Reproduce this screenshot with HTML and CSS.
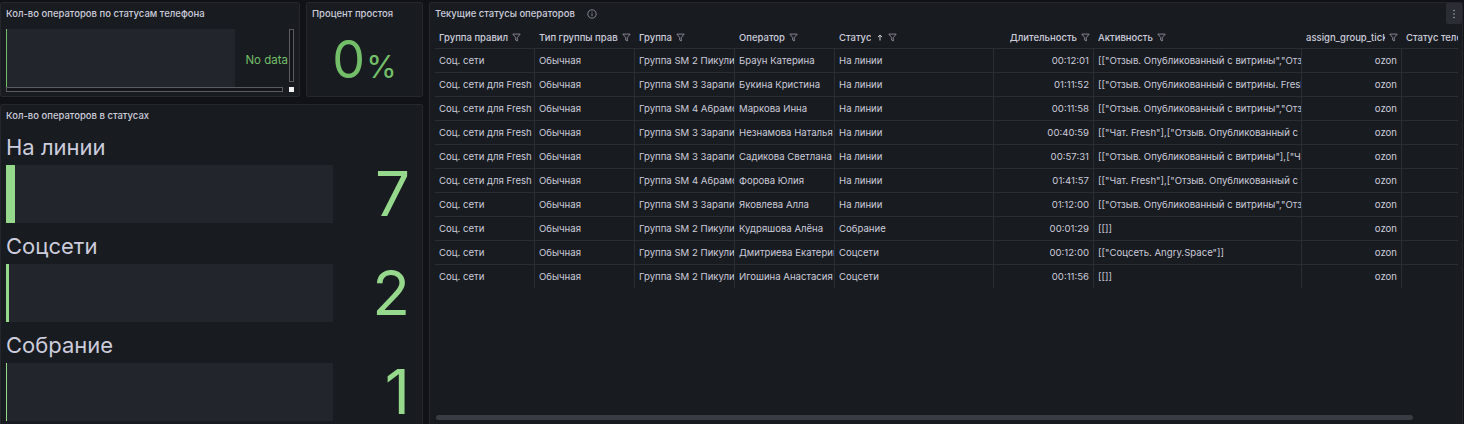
FILE: index.html
```html
<!DOCTYPE html>
<html lang="ru">
<head>
<meta charset="utf-8">
<title>Статусы операторов</title>
<link rel="stylesheet" href="styles.css">
</head>
<body>
<div class="dash">
  <div class="left">
    <div class="toprow">
      <section class="panel p-phone">
        <div class="ptitle">Кол-во операторов по статусам телефона</div>
        <div class="gauge-wrap">
          <div class="gauge-main">
            <div class="gauge-bg"></div>
            <div class="nodata">No data</div>
          </div>
          <div class="vscroll"></div>
          <div class="hscroll"></div>
          <div class="corner"></div>
        </div>
      </section>
      <section class="panel p-pct">
        <div class="ptitle">Процент простоя</div>
        <div class="pct"><span class="pct-num">0</span><span class="pct-unit">%</span></div>
      </section>
    </div>
    <section class="panel p-status">
      <div class="ptitle">Кол-во операторов в статусах</div>
      <div class="bars">
        <div class="bar-item">
          <div class="bar-label">На линии</div>
          <div class="bar-row">
            <div class="bar-track"><div class="bar-fill" style="width:9px"></div></div>
            <div class="bar-value">7</div>
          </div>
        </div>
        <div class="bar-item">
          <div class="bar-label">Соцсети</div>
          <div class="bar-row">
            <div class="bar-track"><div class="bar-fill" style="width:2.6px"></div></div>
            <div class="bar-value">2</div>
          </div>
        </div>
        <div class="bar-item">
          <div class="bar-label">Собрание</div>
          <div class="bar-row">
            <div class="bar-track"><div class="bar-fill" style="width:1.3px"></div></div>
            <div class="bar-value">1</div>
          </div>
        </div>
      </div>
    </section>
  </div>

  <section class="panel p-table">
    <div class="ptitle title-row">
      <span>Текущие статусы операторов</span>
      <svg class="info" width="10" height="10" viewBox="0 0 10 10"><circle cx="5" cy="5" r="4.2" fill="none" stroke="#8e8e9e" stroke-width="0.9"/><line x1="5" y1="4.4" x2="5" y2="7.2" stroke="#8e8e9e" stroke-width="0.9"/><circle cx="5" cy="3" r="0.55" fill="#8e8e9e"/></svg>
      <div class="menu-btn"><svg width="4" height="10" viewBox="0 0 4 10"><circle cx="2" cy="1.5" r="0.8" fill="#a3a4ad"/><circle cx="2" cy="5" r="0.8" fill="#a3a4ad"/><circle cx="2" cy="8.5" r="0.8" fill="#a3a4ad"/></svg></div>
    </div>
    <div class="table-wrap">
      <div class="trow thead">
        <div class="th c1"><span class="tht">Группа правил</span><svg class="flt" width="9" height="9" viewBox="0 0 9 9"><path d="M0.8 1.1 H8.2 L5.3 4.6 V8 L3.7 7.1 V4.6 Z"/></svg></div>
        <div class="th c2"><span class="tht">Тип группы правил</span><svg class="flt" width="9" height="9" viewBox="0 0 9 9"><path d="M0.8 1.1 H8.2 L5.3 4.6 V8 L3.7 7.1 V4.6 Z"/></svg></div>
        <div class="th c3"><span class="tht">Группа</span><svg class="flt" width="9" height="9" viewBox="0 0 9 9"><path d="M0.8 1.1 H8.2 L5.3 4.6 V8 L3.7 7.1 V4.6 Z"/></svg></div>
        <div class="th c4"><span class="tht">Оператор</span><svg class="flt" width="9" height="9" viewBox="0 0 9 9"><path d="M0.8 1.1 H8.2 L5.3 4.6 V8 L3.7 7.1 V4.6 Z"/></svg></div>
        <div class="th c5"><span class="tht">Статус</span><svg class="sort" width="6" height="7" viewBox="0 0 6 7"><path d="M3 6.5 V1 M0.9 3.1 L3 1 L5.1 3.1"/></svg><svg class="flt" width="9" height="9" viewBox="0 0 9 9"><path d="M0.8 1.1 H8.2 L5.3 4.6 V8 L3.7 7.1 V4.6 Z"/></svg></div>
        <div class="th c6 r"><span class="tht">Длительность</span><svg class="flt" width="9" height="9" viewBox="0 0 9 9"><path d="M0.8 1.1 H8.2 L5.3 4.6 V8 L3.7 7.1 V4.6 Z"/></svg></div>
        <div class="th c7"><span class="tht">Активность</span><svg class="flt" width="9" height="9" viewBox="0 0 9 9"><path d="M0.8 1.1 H8.2 L5.3 4.6 V8 L3.7 7.1 V4.6 Z"/></svg></div>
        <div class="th c8 r"><span class="tht">assign_group_ticket</span><svg class="flt" width="9" height="9" viewBox="0 0 9 9"><path d="M0.8 1.1 H8.2 L5.3 4.6 V8 L3.7 7.1 V4.6 Z"/></svg></div>
        <div class="th c9"><span class="tht">Статус телефона</span></div>
      </div>

      <div class="trow">
        <div class="td c1">Соц. сети</div><div class="td c2">Обычная</div><div class="td c3">Группа SM 2 Пикулина</div><div class="td c4">Браун Катерина</div><div class="td c5">На линии</div><div class="td c6 r">00:12:01</div><div class="td c7">[["Отзыв. Опубликованный с витрины","Отзыв. Опубликованный с витрины. Fresh"]]</div><div class="td c8 r">ozon</div><div class="td c9"></div>
      </div>
      <div class="trow">
        <div class="td c1">Соц. сети для Fresh</div><div class="td c2">Обычная</div><div class="td c3">Группа SM 3 Зарапина</div><div class="td c4">Букина Кристина</div><div class="td c5">На линии</div><div class="td c6 r">01:11:52</div><div class="td c7">[["Отзыв. Опубликованный с витрины. Fresh"]]</div><div class="td c8 r">ozon</div><div class="td c9"></div>
      </div>
      <div class="trow">
        <div class="td c1">Соц. сети для Fresh</div><div class="td c2">Обычная</div><div class="td c3">Группа SM 4 Абрамова</div><div class="td c4">Маркова Инна</div><div class="td c5">На линии</div><div class="td c6 r">00:11:58</div><div class="td c7">[["Отзыв. Опубликованный с витрины","Отзыв. Опубликованный с витрины. Fresh"]]</div><div class="td c8 r">ozon</div><div class="td c9"></div>
      </div>
      <div class="trow">
        <div class="td c1">Соц. сети для Fresh</div><div class="td c2">Обычная</div><div class="td c3">Группа SM 3 Зарапина</div><div class="td c4">Незнамова Наталья</div><div class="td c5">На линии</div><div class="td c6 r">00:40:59</div><div class="td c7">[["Чат. Fresh"],["Отзыв. Опубликованный с витрины"]]</div><div class="td c8 r">ozon</div><div class="td c9"></div>
      </div>
      <div class="trow">
        <div class="td c1">Соц. сети для Fresh</div><div class="td c2">Обычная</div><div class="td c3">Группа SM 3 Зарапина</div><div class="td c4">Садикова Светлана</div><div class="td c5">На линии</div><div class="td c6 r">00:57:31</div><div class="td c7">[["Отзыв. Опубликованный с витрины"],["Чат. Fresh"]]</div><div class="td c8 r">ozon</div><div class="td c9"></div>
      </div>
      <div class="trow">
        <div class="td c1">Соц. сети для Fresh</div><div class="td c2">Обычная</div><div class="td c3">Группа SM 4 Абрамова</div><div class="td c4">Форова Юлия</div><div class="td c5">На линии</div><div class="td c6 r">01:41:57</div><div class="td c7">[["Чат. Fresh"],["Отзыв. Опубликованный с витрины"]]</div><div class="td c8 r">ozon</div><div class="td c9"></div>
      </div>
      <div class="trow">
        <div class="td c1">Соц. сети</div><div class="td c2">Обычная</div><div class="td c3">Группа SM 3 Зарапина</div><div class="td c4">Яковлева Алла</div><div class="td c5">На линии</div><div class="td c6 r">01:12:00</div><div class="td c7">[["Отзыв. Опубликованный с витрины","Отзыв. Опубликованный с витрины. Fresh"]]</div><div class="td c8 r">ozon</div><div class="td c9"></div>
      </div>
      <div class="trow">
        <div class="td c1">Соц. сети</div><div class="td c2">Обычная</div><div class="td c3">Группа SM 2 Пикулина</div><div class="td c4">Кудряшова Алёна</div><div class="td c5">Собрание</div><div class="td c6 r">00:01:29</div><div class="td c7">[[]]</div><div class="td c8 r">ozon</div><div class="td c9"></div>
      </div>
      <div class="trow">
        <div class="td c1">Соц. сети</div><div class="td c2">Обычная</div><div class="td c3">Группа SM 2 Пикулина</div><div class="td c4">Дмитриева Екатерина</div><div class="td c5">Соцсети</div><div class="td c6 r">00:12:00</div><div class="td c7">[["Соцсеть. Angry.Space"]]</div><div class="td c8 r">ozon</div><div class="td c9"></div>
      </div>
      <div class="trow last">
        <div class="td c1">Соц. сети</div><div class="td c2">Обычная</div><div class="td c3">Группа SM 2 Пикулина</div><div class="td c4">Игошина Анастасия</div><div class="td c5">Соцсети</div><div class="td c6 r">00:11:56</div><div class="td c7">[[]]</div><div class="td c8 r">ozon</div><div class="td c9"></div>
      </div>
    </div>
    <div class="hbar"></div>
  </section>
</div>
</body>
</html>
```

FILE: styles.css
```css
* { box-sizing: border-box; }
html, body { margin: 0; padding: 0; height: 100%; overflow: hidden; }
body {
  background: #111217;
  color: #ccccdc;
  font-family: Inter, "Noto Sans", sans-serif;
}

.dash { display: flex; gap: 6px; padding-top: 2px; width: 1463px; }
.left { width: 423px; flex-shrink: 0; display: flex; flex-direction: column; gap: 7px; }
.toprow { display: flex; gap: 6px; height: 95px; }

.panel {
  background: #181b1f;
  border: 1px solid #25272d;
  border-radius: 2px;
}

.ptitle {
  height: 21px;
  line-height: 21px;
  font-size: 9.5px;
  font-weight: 500;
  white-space: nowrap;
  overflow: hidden;
  color: #ccccdc;
}

/* phone status panel */
.p-phone { width: 300px; padding: 0 5px; }
.gauge-wrap {
  margin-top: 5px;
  display: grid;
  grid-template-columns: 283px 5px;
  grid-template-rows: 58px 5px;
}
.gauge-main { display: flex; }
.gauge-bg { width: 229px; background: #22252b; border-left: 1px solid #73bf69; }
.nodata {
  flex: 1;
  text-align: right;
  padding-right: 1px;
  line-height: 62px;
  font-size: 11.5px;
  color: #73bf69;
}
.vscroll { height: 53px; border: 1px solid #595b61; background: #141518; }
.hscroll { width: 277px; border: 1px solid #595b61; background: #141518; }
.corner { background: #f2f2f2; }

/* percent panel */
.p-pct { width: 117px; padding: 0 5px; }
.pct {
  display: flex;
  justify-content: center;
  align-items: baseline;
  margin-top: 9px;
  line-height: 54px;
  color: #73bf69;
}
.pct-num { font-size: 52px; }
.pct-unit { font-size: 31px; margin-left: 1px; }

/* status bars panel */
.p-status { height: 340px; padding: 0 0 0 5px; }
.bars { margin-top: 8px; }
.bar-item { margin-bottom: 10px; }
.bar-label { font-size: 22px; line-height: 26px; height: 26px; white-space: nowrap; }
.bar-row { display: flex; margin-top: 5px; height: 58px; }
.bar-track { width: 327px; background: #22252b; display: flex; }
.bar-fill { background: #96d98d; }
.bar-value {
  flex: 1;
  text-align: right;
  padding-right: 12px;
  font-size: 62px;
  line-height: 58px;
  color: #96d98d;
}

/* table panel */
.p-table {
  width: 1034px;
  flex-shrink: 0;
  height: 430px;
  padding: 0 4px 0 5px;
  display: flex;
  flex-direction: column;
}
.title-row { display: flex; align-items: center; overflow: visible; }
.info { margin-left: 12px; }
.menu-btn {
  margin-left: auto;
  margin-right: -4px;
  width: 16px;
  height: 21px;
  background: #2a2d33;
  border-radius: 2px;
  display: flex;
  align-items: center;
  justify-content: center;
}

.table-wrap { margin-top: 2px; height: 389px; overflow: hidden; flex-shrink: 0; }
.trow { display: flex; width: max-content; }
.c1, .c2, .c3, .c4, .c6, .c8, .c9 { width: 100px; }
.c5 { width: 159px; }
.c7 { width: 208px; }

.th {
  flex-shrink: 0;
  height: 23px;
  border-bottom: 1px solid #2a2d33;
  padding: 0 4px;
  display: flex;
  align-items: center;
  gap: 4px;
  font-size: 9.5px;
  font-weight: 500;
  overflow: hidden;
}
.th.r { justify-content: flex-end; }
.tht { white-space: nowrap; overflow: hidden; min-width: 0; flex-shrink: 1; }
.flt { flex-shrink: 0; fill: none; stroke: #8e8e9e; stroke-width: 0.9; stroke-linejoin: round; }
.sort { flex-shrink: 0; fill: none; stroke: #ccccdc; stroke-width: 1; margin-left: 2px; margin-right: 1px; }

.td {
  flex-shrink: 0;
  height: 24px;
  line-height: 23px;
  border-bottom: 1px solid #2a2d33;
  border-right: 1px solid #2a2d33;
  padding-left: 4px;
  font-size: 9.6px;
  white-space: nowrap;
  overflow: hidden;
}
.td.r { text-align: right; padding-right: 4px; }
.trow.last .td { border-bottom-color: transparent; }

.hbar {
  margin-left: 1px;
  width: 977px;
  height: 5px;
  background: #393c42;
  border-radius: 3px;
  flex-shrink: 0;
}
```
